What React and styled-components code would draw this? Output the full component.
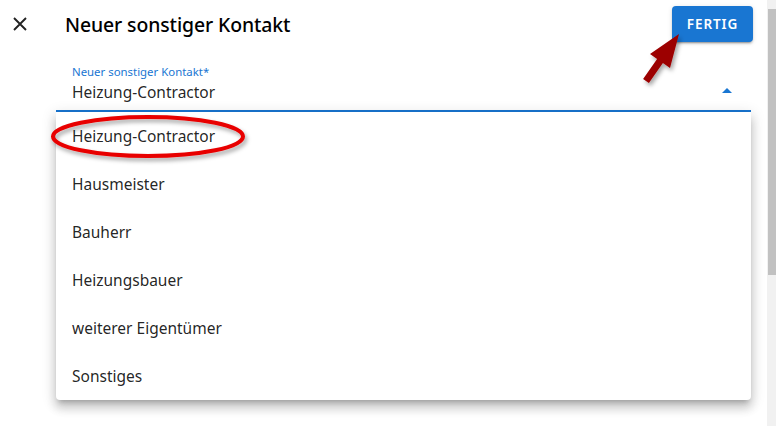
import styled, { createGlobalStyle } from "styled-components";

const GlobalStyle = createGlobalStyle`
  * {
    box-sizing: border-box;
  }
  body {
    margin: 0;
    background: #fff;
    font-family: "Noto Sans", "Open Sans", sans-serif;
    color: rgba(0, 0, 0, 0.87);
  }
`;

const options = [
  "Heizung-Contractor",
  "Hausmeister",
  "Bauherr",
  "Heizungsbauer",
  "weiterer Eigentümer",
  "Sonstiges",
];

function App() {
  return (
    <Page>
      <GlobalStyle />
      <Main>
        <Header>
          <CloseButton aria-label="close">
            <svg width="14" height="14" viewBox="0 0 14 14">
              <path d="M1 1 L13 13 M13 1 L1 13" stroke="#222" strokeWidth="1.9" />
            </svg>
          </CloseButton>
          <Title>Neuer sonstiger Kontakt</Title>
          <DoneButton>FERTIG</DoneButton>
        </Header>

        <Field>
          <Label>Neuer sonstiger Kontakt*</Label>
          <ValueRow>
            <Value>Heizung-Contractor</Value>
            <Caret />
          </ValueRow>
        </Field>

        <Menu>
          {options.map((option) => (
            <MenuItem key={option}>{option}</MenuItem>
          ))}
        </Menu>

        <Annotation width="776" height="426" viewBox="0 0 776 426">
          <defs>
            <filter id="shade" x="-20%" y="-20%" width="140%" height="160%">
              <feDropShadow dx="2" dy="3" stdDeviation="2" floodColor="#000" floodOpacity="0.35" />
            </filter>
          </defs>
          <ellipse
            cx="148"
            cy="136.5"
            rx="95"
            ry="19.5"
            fill="none"
            stroke="#e80000"
            strokeWidth="4"
            filter="url(#shade)"
          />
          <polygon
            points="679,34 670,68 662.9,63 648.9,83 643.1,79 657.1,59 650,54"
            fill="#9c0000"
            filter="url(#shade)"
          />
        </Annotation>
      </Main>

      <Scrollbar>
        <ScrollArrow />
        <Thumb />
      </Scrollbar>
    </Page>
  );
}

export default App;

const Page = styled.div`
  display: flex;
  width: 776px;
  height: 426px;
  overflow: hidden;
`;

const Main = styled.div`
  position: relative;
  flex: 1;
  display: flex;
  flex-direction: column;
`;

const Header = styled.div`
  display: flex;
  align-items: center;
  height: 48px;
  padding: 0 14px 0 13px;
`;

const CloseButton = styled.div`
  display: flex;
  align-items: center;
  justify-content: center;
  width: 14px;
  height: 14px;
  margin-right: 38px;
`;

const Title = styled.h1`
  flex: 1;
  margin: 0;
  font-size: 19.4px;
  font-weight: 500;
  color: #000;
  letter-spacing: -0.1px;
`;

const DoneButton = styled.button`
  width: 81px;
  height: 36px;
  border: none;
  border-radius: 4px;
  background: #1976d2;
  color: #fff;
  font-family: "Noto Sans", sans-serif;
  font-size: 13.5px;
  font-weight: 600;
  letter-spacing: 0.9px;
  box-shadow: 0 3px 1px -2px rgba(0, 0, 0, 0.2), 0 2px 2px 0 rgba(0, 0, 0, 0.14),
    0 1px 5px 0 rgba(0, 0, 0, 0.12);
`;

const Field = styled.div`
  margin: 0 16px 0 56px;
  padding: 16px 19px 6px 16px;
  border-bottom: 2px solid #1976d2;
`;

const Label = styled.div`
  font-size: 11.4px;
  line-height: 16px;
  color: #1976d2;
`;

const ValueRow = styled.div`
  display: flex;
  align-items: center;
  justify-content: space-between;
  height: 24px;
`;

const Value = styled.div`
  font-size: 15.5px;
  line-height: 24px;
`;

const Caret = styled.div`
  width: 0;
  height: 0;
  border-left: 5px solid transparent;
  border-right: 5px solid transparent;
  border-bottom: 5px solid #1976d2;
  margin-bottom: 3px;
`;

const Menu = styled.ul`
  list-style: none;
  margin: 0 16px 0 56px;
  padding: 0;
  background: #fff;
  border-radius: 0 0 4px 4px;
  box-shadow: 0 5px 5px -3px rgba(0, 0, 0, 0.2), 0 8px 10px 1px rgba(0, 0, 0, 0.14),
    0 3px 14px 2px rgba(0, 0, 0, 0.12);
`;

const MenuItem = styled.li`
  height: 48px;
  padding-left: 16px;
  font-size: 15.5px;
  line-height: 48px;
`;

const Annotation = styled.svg`
  position: absolute;
  left: 0;
  top: 0;
  pointer-events: none;
  overflow: visible;
`;

const Scrollbar = styled.div`
  width: 9px;
  display: flex;
  flex-direction: column;
  background: #f1f1f1;
`;

const ScrollArrow = styled.div`
  height: 9px;
`;

const Thumb = styled.div`
  height: 266px;
  margin-left: 1px;
  background: #c1c1c1;
`;
